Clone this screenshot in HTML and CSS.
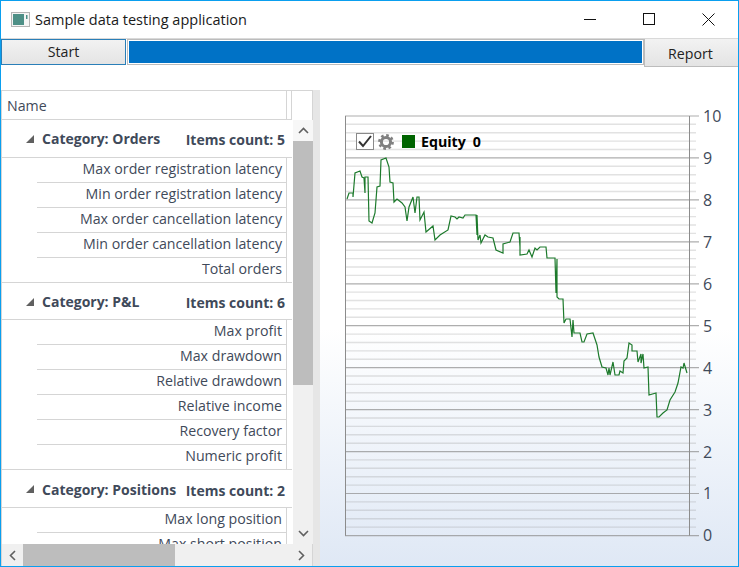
FILE: index.html
```html
<!DOCTYPE html>
<html lang="en">

<head>
    <meta charset="UTF-8">
    <title>Sample data testing application</title>
    <link rel="stylesheet" href="styles.css">
</head>

<body>
    <div class="window">
        <div class="titlebar">
            <svg class="app-icon" width="19" height="15" viewBox="0 0 19 15">
                <rect x="0.5" y="0.5" width="18" height="14" fill="#f4f4f4" stroke="#b4b4b4" />
                <rect x="2" y="2" width="11" height="11" fill="#4d8f86" />
                <rect x="15" y="3" width="1.5" height="4" fill="#4d8f86" />
            </svg>
            <span class="title">Sample data testing application</span>
            <div class="controls">
                <svg width="13" height="13" viewBox="0 0 13 13">
                    <path d="M0 6.5H12" stroke="#111" fill="none" />
                </svg>
                <svg width="13" height="13" viewBox="0 0 13 13">
                    <rect x="0.5" y="0.5" width="11" height="11" stroke="#111" fill="none" />
                </svg>
                <svg width="13" height="13" viewBox="0 0 13 13">
                    <path d="M0.5 0.5L12.5 12.5M12.5 0.5L0.5 12.5" stroke="#111" fill="none" />
                </svg>
            </div>
        </div>

        <div class="toolbar">
            <div class="btn btn-start">Start</div>
            <div class="progress"><div class="progress-fill"></div></div>
            <div class="btn btn-report">Report</div>
        </div>

        <div class="content">
            <div class="table">
                <div class="table-head">
                    <div class="head-name">Name</div>
                    <div class="head-rest"></div>
                </div>
                <div class="table-body">
                    <div class="rows">
                        <div class="group group-first">
                            <span class="arrow"></span>
                            <span class="group-name">Category: Orders</span>
                            <span class="group-count">Items count: 5</span>
                        </div>
                        <div class="row">Max order registration latency</div>
                        <div class="row">Min order registration latency</div>
                        <div class="row">Max order cancellation latency</div>
                        <div class="row">Min order cancellation latency</div>
                        <div class="row row-last">Total orders</div>
                        <div class="group">
                            <span class="arrow"></span>
                            <span class="group-name">Category: P&amp;L</span>
                            <span class="group-count">Items count: 6</span>
                        </div>
                        <div class="row">Max profit</div>
                        <div class="row">Max drawdown</div>
                        <div class="row">Relative drawdown</div>
                        <div class="row">Relative income</div>
                        <div class="row">Recovery factor</div>
                        <div class="row row-last">Numeric profit</div>
                        <div class="group group-tall">
                            <span class="arrow"></span>
                            <span class="group-name">Category: Positions</span>
                            <span class="group-count">Items count: 2</span>
                        </div>
                        <div class="row">Max long position</div>
                        <div class="row">Max short position</div>
                    </div>
                    <div class="vscroll">
                        <div class="sb-btn sb-btn-on">
                            <svg width="11" height="7" viewBox="0 0 11 7">
                                <path d="M1 6L5.5 1.5L10 6" stroke="#606060" stroke-width="1.6" fill="none" />
                            </svg>
                        </div>
                        <div class="vthumb"></div>
                        <div class="sb-track"></div>
                        <div class="sb-btn">
                            <svg width="11" height="7" viewBox="0 0 11 7">
                                <path d="M1 1L5.5 5.5L10 1" stroke="#606060" stroke-width="1.6" fill="none" />
                            </svg>
                        </div>
                    </div>
                </div>
                <div class="hscroll">
                    <div class="sb-btn-h">
                        <svg width="7" height="11" viewBox="0 0 7 11">
                            <path d="M6 1L1.5 5.5L6 10" stroke="#606060" stroke-width="1.6" fill="none" />
                        </svg>
                    </div>
                    <div class="hthumb"></div>
                    <div class="sb-track"></div>
                    <div class="sb-btn-h">
                        <svg width="7" height="11" viewBox="0 0 7 11">
                            <path d="M1 1L5.5 5.5L1 10" stroke="#606060" stroke-width="1.6" fill="none" />
                        </svg>
                    </div>
                </div>
            </div>

            <div class="splitter"></div>

            <div class="chart">
                <svg class="plot" width="418" height="476" viewBox="320 90 418 476">
                    <!-- minor grid -->
                    <path class="minor" d="M345 527.1H696M345 518.7H696M345 510.3H696M345 501.9H696
                        M345 485.1H696M345 476.7H696M345 468.3H696M345 459.9H696
                        M345 443.2H696M345 434.8H696M345 426.4H696M345 418H696
                        M345 401.2H696M345 392.8H696M345 384.4H696M345 376H696
                        M345 359.3H696M345 350.9H696M345 342.5H696M345 334.1H696
                        M345 317.3H696M345 308.9H696M345 300.5H696M345 292.1H696
                        M345 275.4H696M345 267H696M345 258.6H696M345 250.2H696
                        M345 233.4H696M345 225H696M345 216.6H696M345 208.2H696
                        M345 191.5H696M345 183.1H696M345 174.7H696M345 166.3H696
                        M345 149.5H696M345 141.1H696M345 132.7H696M345 124.3H696" />
                    <!-- major grid -->
                    <path class="major" d="M345 535.7H699M345 493.5H699M345 451.6H699M345 409.6H699
                        M345 367.7H699M345 325.7H699M345 283.8H699M345 241.8H699
                        M345 199.9H699M345 157.9H699M345 116H699" />
                    <path class="frame" d="M345.5 116V535.7M689.5 116V535.7" />

                    <polyline class="equity" points="347,199 349,193 353,193 353,197 355,173 360,171 362,177 364,178 365,193 365,177 368,177 369,221 372,223 375,213 377,187 380,186 381,160 386,158 389,167 390,182 393,183 394,202 397,199 402,203 405,207 407,221 409,207 413,197 415,213 417,197 419,197 420,220 424,212 426,232 433,226 435,240 440,235 448,230 451,216 455,217 457,219 459,217 463,218 465,215 476,215 477,235 477,215 478,240 480,235 481,243 485,235 488,237 493,238 496,250 503,253 503,244 510,242 513,233 519,233 520,247 520,237 520,255 527,254 529,250 532,257 535,248 537,250 540,247 546,247 547,258 555,258 556,293 557,259 557,297 559,299 563,299 564,323 566,319 570,319 572,337 573,320 574,333 580,333 582,342 584,342 587,334 593,333 597,345 599,357 602,367 606,368 608,375 609,368 610,375 613,362 615,375 619,375 620,371 623,373 624,361 627,358 629,343 632,345 632,351 637,351 638,362 641,354 641,363 643,354 644,368 648,367 649,395 656,393 657,417 659,417 663,413 667,410 670,400 675,392 678,383 681,367 683,368 684,363 687,373" />

                    <text class="axis" x="703" y="122">10</text>
                    <text class="axis" x="703" y="164">9</text>
                    <text class="axis" x="703" y="206">8</text>
                    <text class="axis" x="703" y="248">7</text>
                    <text class="axis" x="703" y="290">6</text>
                    <text class="axis" x="703" y="332">5</text>
                    <text class="axis" x="703" y="374">4</text>
                    <text class="axis" x="703" y="416">3</text>
                    <text class="axis" x="703" y="458">2</text>
                    <text class="axis" x="703" y="499">1</text>
                    <text class="axis" x="703" y="541">0</text>
                </svg>

                <div class="legend">
                    <svg class="check" width="18" height="17" viewBox="0 0 18 17">
                        <rect x="0.5" y="0.5" width="17" height="16" fill="#fff" stroke="#8a8a8a" />
                        <path d="M3 8.5L7 13L15 3" stroke="#333" stroke-width="2" fill="none" />
                    </svg>
                    <svg class="gear" width="16" height="16" viewBox="0 0 16 16">
                        <circle cx="8" cy="8" r="4.6" fill="none" stroke="#808080" stroke-width="3" />
                        <circle cx="8" cy="8" r="6.6" fill="none" stroke="#808080" stroke-width="2.6" stroke-dasharray="2.6 2.58" />
                    </svg>
                    <span class="swatch"></span>
                    <span class="legend-name">Equity</span>
                    <span class="legend-value">0</span>
                </div>
            </div>
        </div>
    </div>
</body>

</html>
```

FILE: styles.css
```css
* {
    box-sizing: border-box;
}

body {
    margin: 0;
    background-color: #fff;
    font-family: "Open Sans", "Noto Sans", sans-serif;
    font-size: 14.2px;
    color: #3f4a5a;
}

.window {
    width: 739px;
    height: 567px;
    border: 1px solid #0a9fef;
    display: flex;
    flex-direction: column;
    overflow: hidden;
}

.titlebar {
    height: 37px;
    flex: none;
    display: flex;
    align-items: center;
    padding-left: 10px;
}

.app-icon {
    margin-right: 5px;
}

.title {
    color: #1a1a1a;
    font-size: 14.5px;
}

.controls {
    margin-left: auto;
    margin-right: 23px;
    display: flex;
    gap: 46px;
}

.toolbar {
    height: 29px;
    flex: none;
    display: flex;
    align-items: flex-start;
    border-top: 1px solid #d9d9d9;
}

.btn {
    background: linear-gradient(#f2f2f2, #e4e4e4);
    color: #222;
    text-align: center;
}

.btn-start {
    width: 125px;
    height: 26px;
    line-height: 24px;
    border: 1px solid #2a7fb8;
}

.progress {
    flex: 1;
    height: 26px;
    margin-left: 1px;
    border: 1px solid #bcbcbc;
    padding: 1px;
}

.progress-fill {
    height: 100%;
    background-color: #0072c6;
}

.btn-report {
    width: 94px;
    height: 28px;
    line-height: 30px;
    padding-right: 2px;
    border-left: 1px solid #bcbcbc;
    border-bottom: 1px solid #bcbcbc;
}

.content {
    flex: 1;
    min-height: 0;
    margin-top: 23px;
    display: flex;
}

.table {
    width: 312px;
    flex: none;
    border: 1px solid #d5d5d5;
    border-bottom: none;
    display: flex;
    flex-direction: column;
}

.table-head {
    height: 29px;
    flex: none;
    display: flex;
}

.head-name {
    width: 285px;
    line-height: 30px;
    padding-left: 5px;
    border-right: 1px solid #d5d5d5;
    border-bottom: 1px solid #d5d5d5;
}

.head-rest {
    width: 5px;
    border-right: 1px solid #d5d5d5;
    border-bottom: 1px solid #d5d5d5;
}

.table-body {
    flex: 1;
    min-height: 0;
    display: flex;
}

.rows {
    width: 290px;
    overflow: hidden;
    flex: none;
}

.group {
    height: 38px;
    display: flex;
    align-items: center;
    padding: 1px 7px 0 24px;
    border-top: 1px solid #d5d5d5;
    border-bottom: 1px solid #d5d5d5;
    font-weight: 700;
    font-size: 14px;
}

.group-first {
    padding-top: 0;
    border-top: none;
}

.group-tall {
    height: 39px;
}

.arrow {
    width: 0;
    height: 0;
    border-left: 8px solid transparent;
    border-bottom: 8px solid #606060;
    margin-right: 8px;
}

.group-count {
    margin-left: auto;
    padding-top: 2px;
}

.row {
    height: 25px;
    margin-left: 35px;
    padding-right: 4px;
    width: 250px;
    line-height: 22px;
    text-align: right;
    white-space: nowrap;
    border-right: 1px solid #d5d5d5;
    border-bottom: 1px solid #d5d5d5;
}

.row-last {
    height: 24px;
    border-bottom: none;
}

.vscroll {
    width: 20px;
    flex: none;
    margin-left: 1px;
    background-color: #f0f0f0;
    display: flex;
    flex-direction: column;
}

.sb-btn {
    height: 21px;
    flex: none;
    display: flex;
    align-items: center;
    justify-content: center;
}

.sb-btn-on {
    background-color: #f7f7f7;
}

.vthumb {
    height: 244px;
    flex: none;
    background-color: #bdbdbd;
}

.sb-track {
    flex: 1;
}

.hscroll {
    height: 22px;
    flex: none;
    background-color: #f0f0f0;
    display: flex;
}

.sb-btn-h {
    width: 21px;
    flex: none;
    display: flex;
    align-items: center;
    justify-content: center;
}

.hthumb {
    width: 152px;
    flex: none;
    background-color: #bdbdbd;
}

.splitter {
    width: 7px;
    flex: none;
    background-color: #e6e6e6;
}

.chart {
    flex: 1;
    position: relative;
    background: linear-gradient(#fff 0, #fff 50%, #dfe8f5 100%);
}

.plot {
    display: block;
}

.minor {
    fill: none;
    stroke: #8c8c8c;
    stroke-opacity: 0.25;
    stroke-width: 1.4;
}

.major {
    fill: none;
    stroke: #8c8c8c;
    stroke-opacity: 0.7;
    stroke-width: 1.2;
}

.frame {
    fill: none;
    stroke: #8c8c8c;
}

.equity {
    fill: none;
    stroke: #1d7a2c;
    stroke-width: 1.2;
}

.axis {
    font-size: 16px;
    fill: #3f4a5a;
}

.legend {
    position: absolute;
    left: 36px;
    top: 42px;
    display: flex;
    align-items: center;
}

.check {
    margin-right: 4px;
}

.swatch {
    width: 13px;
    height: 13px;
    background-color: #006400;
    margin-left: 8px;
    margin-right: 6px;
}

.legend-name,
.legend-value {
    color: #000;
    font-weight: 700;
    font-size: 14.2px;
}

.legend-value {
    margin-left: 7px;
}
```
